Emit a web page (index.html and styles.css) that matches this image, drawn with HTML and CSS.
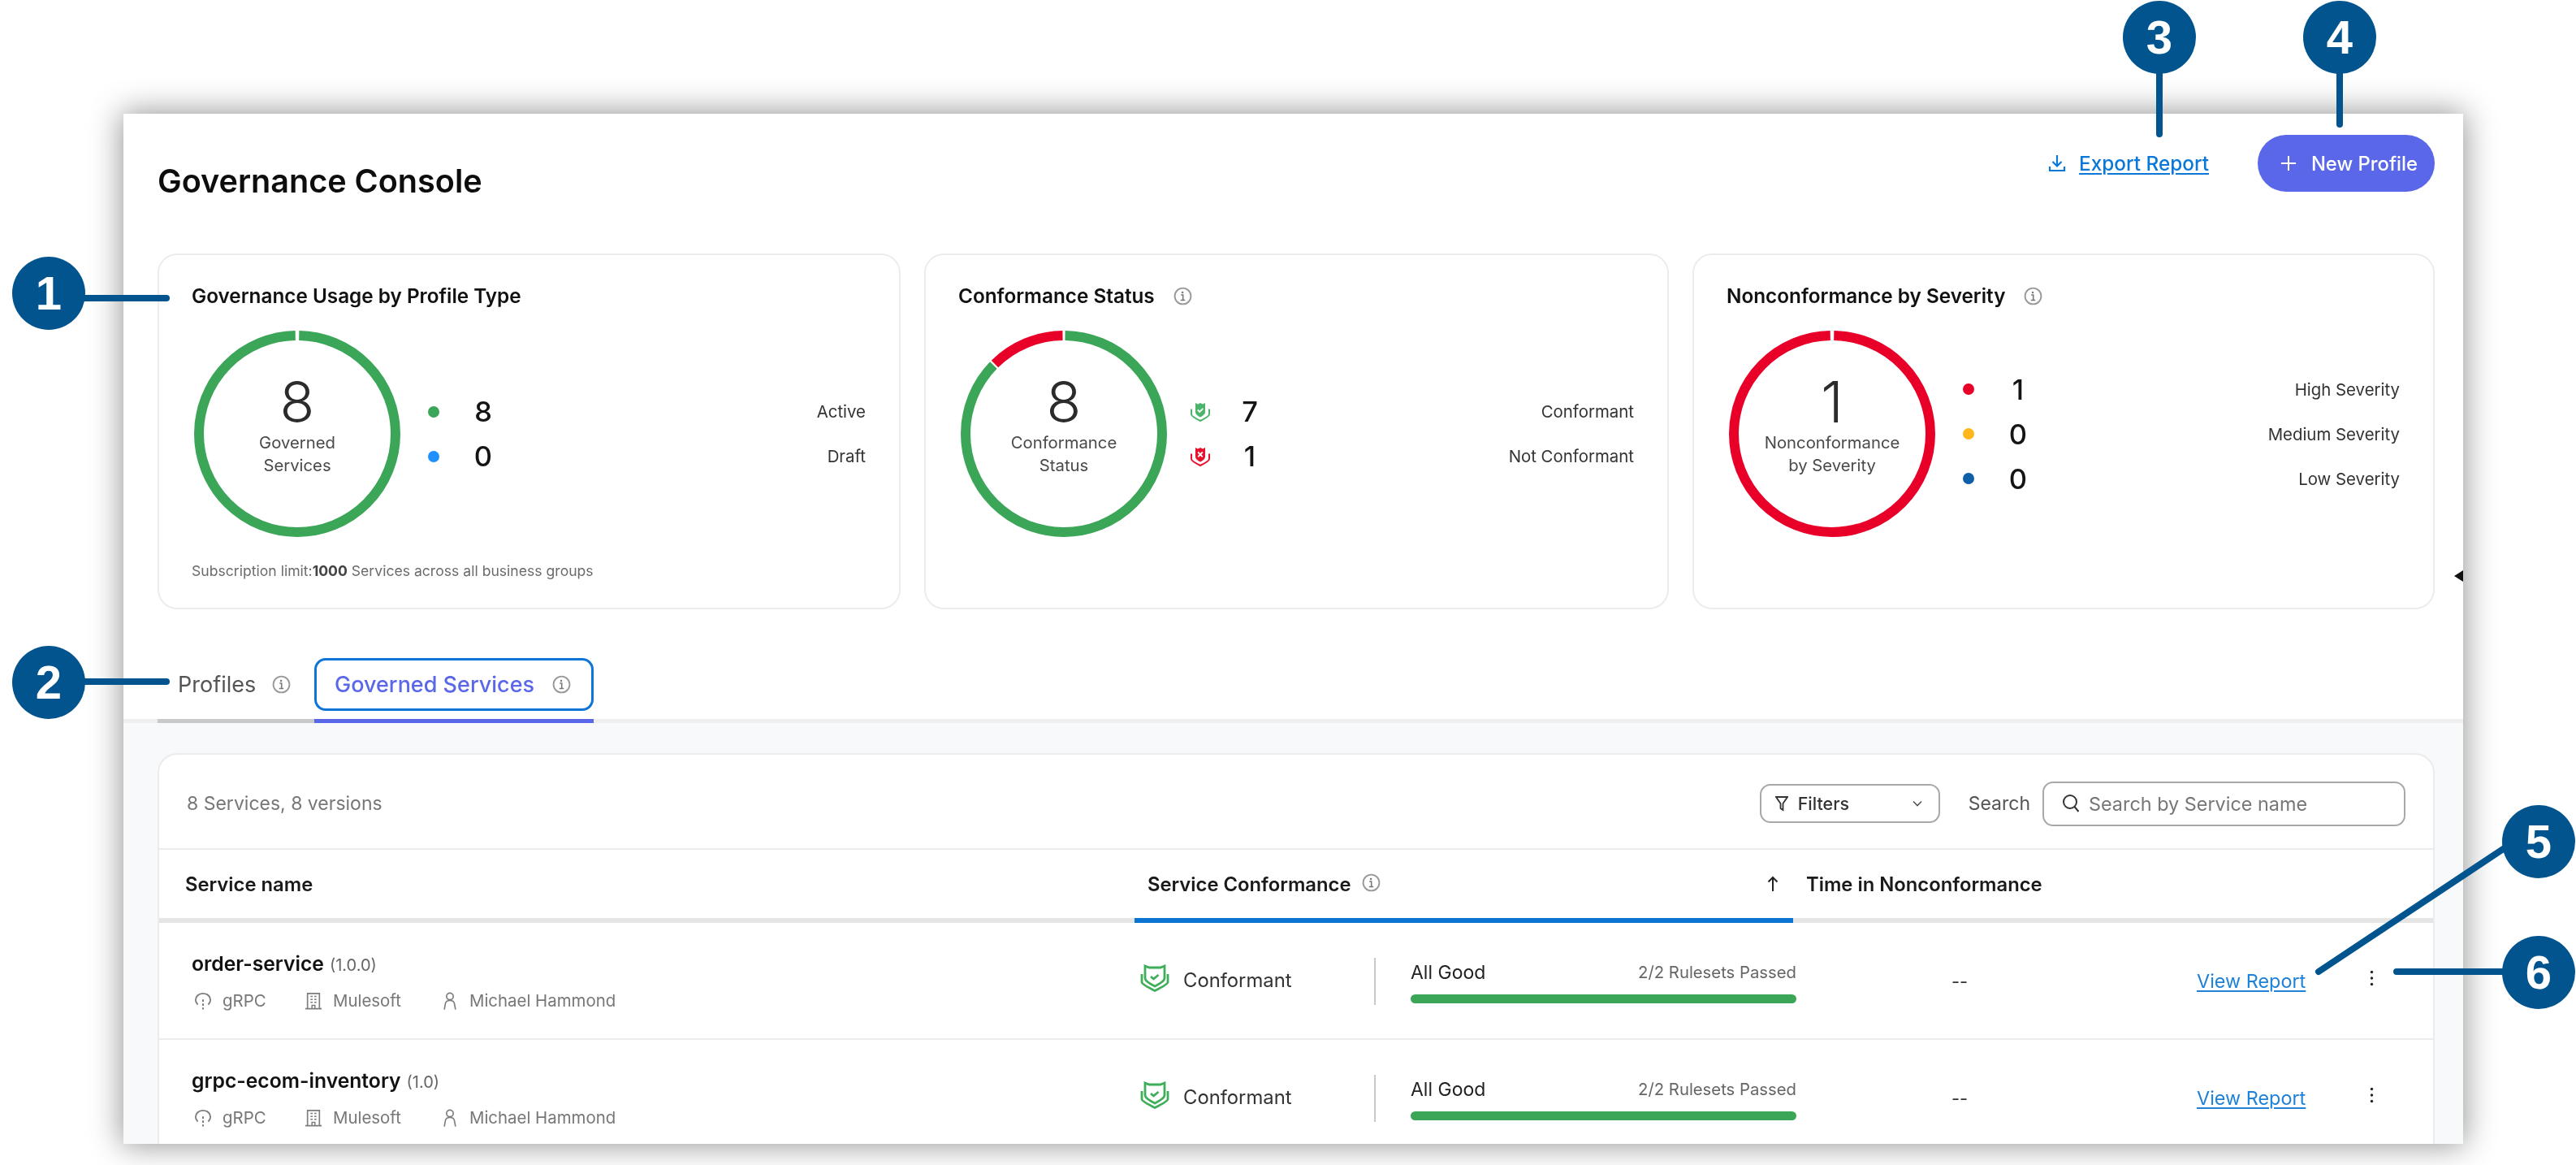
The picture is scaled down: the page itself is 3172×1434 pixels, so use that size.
FILE: index.html
```
<!DOCTYPE html>
<html lang="en">
<head>
<meta charset="utf-8">
<title>Governance Console</title>
<link rel="stylesheet" href="styles.css">
</head>
<body>
<svg class="defs" aria-hidden="true">
  <defs>
    <symbol id="info" viewBox="0 0 22 22">
      <circle cx="11" cy="11" r="9.500" fill="none" stroke="#9a9a9a" stroke-width="1.800"/>
      <circle cx="10.600" cy="6.600" r="1.200" fill="#777"/>
      <path d="M8.800 9.600h2.400v6M8.400 15.800h5.200" fill="none" stroke="#777" stroke-width="1.500"/>
    </symbol>
    <symbol id="shield" viewBox="0 0 36 35">
      <path d="M6 2l5 2h14l5-2V17c0 3.500-6 7-12 10-6-3-12-6.500-12-10z" fill="none" stroke="#3fae5a" stroke-width="2.800"/>
      <path d="M2 12v10c0 2 9 7 16 10.500 7-3.500 16-8.500 16-10.500V12" fill="none" stroke="#3fae5a" stroke-width="2.800"/>
      <path d="M13 15l3.500 3 6-5" fill="none" stroke="#3fae5a" stroke-width="2.800"/>
    </symbol>
    <symbol id="shield-ok" viewBox="0 0 24 24">
      <path d="M6 1l3 1.500L12 1l3 1.500L18 1v11c0 3-3 5-6 6.500C9 17 6 15 6 12z" fill="#4cb56b"/>
      <path d="M1 8.500v6.500c0 2.500 6 5.500 11 8 5-2.500 11-5.500 11-8V8.500" fill="none" stroke="#4cb56b" stroke-width="2"/>
      <path d="M8.800 9.500l2.400 2.400 4.200-4" fill="none" stroke="#fff" stroke-width="1.800"/>
    </symbol>
    <symbol id="shield-bad" viewBox="0 0 24 24">
      <path d="M6 1l3 1.500L12 1l3 1.500L18 1v11c0 3-3 5-6 6.500C9 17 6 15 6 12z" fill="#e8112d"/>
      <path d="M1 8.500v6.500c0 2.500 6 5.500 11 8 5-2.500 11-5.500 11-8V8.500" fill="none" stroke="#e8112d" stroke-width="2"/>
      <path d="M9.200 6.500l5.600 5.800M14.800 6.500l-5.600 5.800" fill="none" stroke="#fff" stroke-width="1.800"/>
    </symbol>
    <symbol id="cloud" viewBox="0 0 24 24">
      <path d="M5 17C3 15 2 13 2 11 2 6 6 2 12 2s10 4 10 9c0 2-1 4-3 6" fill="none" stroke="#7c7c7c" stroke-width="2"/>
      <path d="M12 10v3M12 15.500v3M12 21v2.500" fill="none" stroke="#7c7c7c" stroke-width="2.200"/>
    </symbol>
    <symbol id="building" viewBox="0 0 24 24">
      <path d="M4 22.500V2h16v20.500M1 22.500h22" fill="none" stroke="#7c7c7c" stroke-width="1.800"/>
      <path d="M8 6h3M13 6h3M8 10h3M13 10h3M8 14h3M13 14h3M10 22v-4h4v4" fill="none" stroke="#7c7c7c" stroke-width="1.600"/>
    </symbol>
    <symbol id="person" viewBox="0 0 24 24">
      <circle cx="12" cy="6" r="4.500" fill="none" stroke="#7c7c7c" stroke-width="1.800"/>
      <path d="M4.500 23.500l1.500-8c.5-2.500 3-4 6-4s5.500 1.500 6 4l1.500 8" fill="none" stroke="#7c7c7c" stroke-width="1.800"/>
    </symbol>
  </defs>
</svg>

<main class="stage">
  <section class="panel">
    <header class="head">
      <h1 class="title">Governance Console</h1>
      <div class="actions">
        <a class="export" href="#">
          <svg class="export-icon" viewBox="0 0 22 24"><path d="M11 2v13M5.500 10l5.500 5.500 5.500-5.500M2 16v5h18v-5" fill="none" stroke="#0b78d8" stroke-width="2.200"/></svg>
          <span class="export-text">Export Report</span>
        </a>
        <button class="primary" type="button">
          <svg class="plus" viewBox="0 0 22 22"><path d="M11 1v20M1 11h20" fill="none" stroke="#fff" stroke-width="2.200"/></svg>
          New Profile
        </button>
      </div>
    </header>

    <div class="cards">
      <article class="card">
        <h2 class="card-title">Governance Usage by Profile Type</h2>
        <div class="chart-row">
          <div class="donut">
            <svg class="ring" viewBox="0 0 254 254">
              <circle class="seg green seg-full" cx="127" cy="127" r="121" pathLength="100"/>
            </svg>
            <div class="ring-text"><div class="ring-num">8</div><div class="ring-label">Governed<br>Services</div></div>
          </div>
          <div class="legend">
            <div class="leg-row"><span class="mark"><i class="dot d-green"></i></span><span class="num">8</span><span class="leg-label">Active</span></div>
            <div class="leg-row"><span class="mark"><i class="dot d-blue"></i></span><span class="num">0</span><span class="leg-label">Draft</span></div>
          </div>
        </div>
        <p class="limit">Subscription limit:<b>1000</b> Services across all business groups</p>
      </article>

      <article class="card">
        <h2 class="card-title">Conformance Status <svg class="info"><use href="#info"/></svg></h2>
        <div class="chart-row">
          <div class="donut">
            <svg class="ring" viewBox="0 0 254 254">
              <circle class="seg green seg-major" cx="127" cy="127" r="121" pathLength="100"/>
              <circle class="seg red seg-minor" cx="127" cy="127" r="121" pathLength="100"/>
            </svg>
            <div class="ring-text"><div class="ring-num">8</div><div class="ring-label">Conformance<br>Status</div></div>
          </div>
          <div class="legend">
            <div class="leg-row"><span class="mark"><svg class="mini-shield"><use href="#shield-ok"/></svg></span><span class="num">7</span><span class="leg-label">Conformant</span></div>
            <div class="leg-row"><span class="mark"><svg class="mini-shield"><use href="#shield-bad"/></svg></span><span class="num">1</span><span class="leg-label">Not Conformant</span></div>
          </div>
        </div>
      </article>

      <article class="card">
        <h2 class="card-title">Nonconformance by Severity <svg class="info"><use href="#info"/></svg></h2>
        <div class="chart-row">
          <div class="donut">
            <svg class="ring" viewBox="0 0 254 254">
              <circle class="seg red seg-full" cx="127" cy="127" r="121" pathLength="100"/>
            </svg>
            <div class="ring-text"><div class="ring-num">1</div><div class="ring-label">Nonconformance<br>by Severity</div></div>
          </div>
          <div class="legend">
            <div class="leg-row"><span class="mark"><i class="dot d-red"></i></span><span class="num">1</span><span class="leg-label">High Severity</span></div>
            <div class="leg-row"><span class="mark"><i class="dot d-yellow"></i></span><span class="num">0</span><span class="leg-label">Medium Severity</span></div>
            <div class="leg-row"><span class="mark"><i class="dot d-navy"></i></span><span class="num">0</span><span class="leg-label">Low Severity</span></div>
          </div>
        </div>
      </article>
    </div>

    <nav class="tabs">
      <div class="tab tab-idle"><span class="tab-inner">Profiles <svg class="info"><use href="#info"/></svg></span></div>
      <div class="tab tab-active"><span class="tab-inner tab-focus">Governed Services <svg class="info"><use href="#info"/></svg></span></div>
    </nav>

    <div class="content">
      <div class="table-card">
        <div class="toolbar">
          <span class="count">8 Services, 8 versions</span>
          <div class="tools">
            <div class="filters">
              <svg class="funnel" viewBox="0 0 16 20"><path d="M1 2h14L9.500 10v8L6.500 16v-6z" fill="none" stroke="#333" stroke-width="1.800"/></svg>
              <span class="filters-text">Filters</span>
              <svg class="chev" viewBox="0 0 12 8"><path d="M1 1.500l5 5 5-5" fill="none" stroke="#555" stroke-width="1.600"/></svg>
            </div>
            <label class="search-label">Search</label>
            <div class="search">
              <svg class="lens" viewBox="0 0 22 24"><circle cx="10" cy="10" r="8" fill="none" stroke="#333" stroke-width="2"/><path d="M15.500 16l5 6" fill="none" stroke="#333" stroke-width="2"/></svg>
              <span class="placeholder">Search by Service name</span>
            </div>
          </div>
        </div>

        <div class="thead">
          <div class="th th-name">Service name</div>
          <div class="th th-conf">Service Conformance <svg class="info info-th"><use href="#info"/></svg>
            <svg class="arrow" viewBox="0 0 14 20"><path d="M7 19V2M1.500 7.500L7 2l5.500 5.500" fill="none" stroke="#222" stroke-width="2"/></svg>
          </div>
          <div class="th th-time">Time in Nonconformance</div>
        </div>

        <div class="row">
          <div class="cell-name">
            <div class="svc"><b class="svc-name">order-service</b> <span class="svc-ver">(1.0.0)</span></div>
            <div class="meta">
              <span class="meta-item m-api"><svg class="meta-icon"><use href="#cloud"/></svg>gRPC</span>
              <span class="meta-item m-org"><svg class="meta-icon"><use href="#building"/></svg>Mulesoft</span>
              <span class="meta-item"><svg class="meta-icon"><use href="#person"/></svg>Michael Hammond</span>
            </div>
          </div>
          <div class="cell-conf">
            <svg class="shield"><use href="#shield"/></svg>
            <span class="conf-text">Conformant</span>
            <div class="progress">
              <div class="prog-top"><span class="prog-state">All Good</span><span class="prog-count">2/2 Rulesets Passed</span></div>
              <div class="bar"></div>
            </div>
          </div>
          <div class="cell-end">
            <span class="dash">--</span>
            <a class="report" href="#">View Report</a>
            <svg class="kebab" viewBox="0 0 5 20"><circle cx="2.500" cy="2.500" r="1.700"/><circle cx="2.500" cy="10" r="1.700"/><circle cx="2.500" cy="17.500" r="1.700"/></svg>
          </div>
        </div>

        <div class="row">
          <div class="cell-name">
            <div class="svc"><b class="svc-name">grpc-ecom-inventory</b> <span class="svc-ver">(1.0)</span></div>
            <div class="meta">
              <span class="meta-item m-api"><svg class="meta-icon"><use href="#cloud"/></svg>gRPC</span>
              <span class="meta-item m-org"><svg class="meta-icon"><use href="#building"/></svg>Mulesoft</span>
              <span class="meta-item"><svg class="meta-icon"><use href="#person"/></svg>Michael Hammond</span>
            </div>
          </div>
          <div class="cell-conf">
            <svg class="shield"><use href="#shield"/></svg>
            <span class="conf-text">Conformant</span>
            <div class="progress">
              <div class="prog-top"><span class="prog-state">All Good</span><span class="prog-count">2/2 Rulesets Passed</span></div>
              <div class="bar"></div>
            </div>
          </div>
          <div class="cell-end">
            <span class="dash">--</span>
            <a class="report" href="#">View Report</a>
            <svg class="kebab" viewBox="0 0 5 20"><circle cx="2.500" cy="2.500" r="1.700"/><circle cx="2.500" cy="10" r="1.700"/><circle cx="2.500" cy="17.500" r="1.700"/></svg>
          </div>
        </div>
      </div>
    </div>
  </section>

  <i class="pointer"></i>

  <svg class="leaders" viewBox="0 0 3172 1434">
    <path d="M60 367H205M60 839H205M2659 46V165M2881 46V153M3126 1016L2855 1196M3126 1196H2951"/>
  </svg>
  <div class="callout c1">1</div>
  <div class="callout c2">2</div>
  <div class="callout c3">3</div>
  <div class="callout c4">4</div>
  <div class="callout c5">5</div>
  <div class="callout c6">6</div>
</main>
</body>
</html>
```

FILE: styles.css
```
* { box-sizing: border-box; }
html, body { margin: 0; padding: 0; background: #fff; }
body { font-family: "Inter", "Liberation Sans", sans-serif; color: #1c1c1c; }
.defs { position: absolute; width: 0; height: 0; }

.stage { position: relative; width: 3172px; height: 1434px; overflow: hidden; padding: 140px 0 0 152px; filter: blur(.5px); }

.panel {
  width: 2881px; height: 1268px; background: #fff;
  display: flex; flex-direction: column; overflow: hidden;
  box-shadow: 0 0 36px 2px rgba(0, 0, 0, .42);
}

.head { display: flex; justify-content: space-between; align-items: center; height: 172px; padding: 0 35px 50px 42px; flex: none; }
.title { margin: 0; font-size: 39.600px; font-weight: 600; color: #0d0d0d; line-height: 46px; padding-top: 44px; }
.actions { display: flex; align-items: center; }
.export { display: flex; align-items: center; gap: 16px; color: #0b78d8; font-size: 24.300px; font-weight: 500; text-decoration: none; }
.export-icon { width: 22px; height: 24px; }
.export-text { text-decoration: underline; text-underline-offset: 3px; }
.primary {
  margin-left: 60px; width: 218px; height: 70px; border: 0; border-radius: 35px;
  background: #5a67e8; color: #fff; font: 500 23.800px "Inter", sans-serif;
  display: flex; align-items: center; justify-content: flex-end; gap: 18px; padding: 0 21px 0 0;
}
.plus { width: 20px; height: 20px; }

.cards { display: grid; grid-template-columns: 915px 917px 914px; gap: 29px; padding: 0 35px 0 42px; flex: none; }
.card { height: 438px; background: #fff; border: 2px solid #ececec; border-radius: 24px; padding: 35px 41px 0 40px; }
.card-title { display: flex; align-items: center; gap: 23px; margin: 0 0 28px; font-size: 24.300px; font-weight: 600; line-height: 30px; color: #111; }
.info { width: 23px; height: 23px; flex: none; }

.chart-row { display: flex; align-items: center; height: 254px; padding-left: 3px; }
.donut { width: 254px; height: 254px; display: grid; flex: none; }
.ring, .ring-text { grid-area: 1 / 1; }
.ring { width: 254px; height: 254px; transform: rotate(-90deg); }
.seg { fill: none; stroke-width: 12; }
.green { stroke: #3ba658; }
.red { stroke: #e80028; }
.seg-full { stroke-dasharray: 99.400 100; stroke-dashoffset: -.3; }
.seg-major { stroke-dasharray: 87.100 100; stroke-dashoffset: -.2; }
.seg-minor { stroke-dasharray: 12.200 100; stroke-dashoffset: -87.600; }
.ring-text { place-self: center; text-align: center; padding-bottom: 22px; }
.ring-num { font-size: 70px; font-weight: 300; line-height: 72px; color: #2b2b2b; }
.ring-label { font-size: 20.300px; line-height: 28px; color: #4a4a4a; }

.legend { flex: 1; margin-left: 29px; display: flex; flex-direction: column; }
.leg-row { display: flex; align-items: center; height: 55px; }
.mark { width: 24px; display: flex; justify-content: center; flex: none; }
.dot { width: 14px; height: 14px; border-radius: 50%; display: block; }
.d-green { background: #3ba658; }
.d-blue { background: #1e90ff; }
.d-red { background: #e80028; }
.d-yellow { background: #ffb81c; }
.d-navy { background: #0f5ea8; }
.mini-shield { width: 24px; height: 24px; display: block; }
.num { width: 30px; margin-left: 34px; text-align: center; font-size: 34.500px; font-weight: 500; color: #141414; }
.leg-label { margin-left: auto; font-size: 20.400px; color: #333; }
.limit { margin: 30px 0 0; font-size: 17.600px; line-height: 24px; color: #6b6b6b; }
.limit b { font-weight: 700; color: #444; }

.tabs { display: flex; height: 140px; padding: 60px 35px 0 42px; flex: none; box-shadow: inset 0 -5px 0 #efefef; }
.tab { height: 80px; border-bottom: 5px solid; }
.tab-idle { width: 193px; border-color: #c9c9c9; padding-left: 25px; }
.tab-idle .tab-inner { gap: 20px; }
.tab-active { width: 344px; border-color: #5a67e8; }
.tab-inner { display: flex; align-items: center; gap: 22px; height: 65px; font-size: 27px; color: #555; }
.tab-focus { border: 3.500px solid #0e74d8; border-radius: 14px; padding-left: 22px; color: #5a67e8; font-weight: 500; }

.content { flex: 1; background: #f8f9fa; padding: 37px 35px 0 42px; min-height: 0; }
.table-card { background: #fff; border: 2px solid #ececec; border-bottom: 0; border-radius: 24px 24px 0 0; height: 100%; overflow: hidden; }

.toolbar { height: 117px; display: flex; justify-content: space-between; align-items: center; padding: 5px 34px 0 34px; border-bottom: 2px solid #ececec; }
.count { font-size: 23px; color: #777; }
.tools { display: flex; align-items: center; }
.filters { width: 222px; height: 48px; border: 2px solid #a8a8a8; border-radius: 13px; display: flex; align-items: center; padding: 0 20px 0 17px; }
.funnel { width: 16px; height: 20px; }
.filters-text { margin-left: 12px; font-size: 21.500px; font-weight: 500; color: #333; }
.chev { width: 12px; height: 8px; margin-left: auto; }
.search-label { margin: 0 15px 0 35px; font-size: 23px; color: #555; }
.search { width: 447px; height: 55px; border: 2px solid #a8a8a8; border-radius: 13px; display: flex; align-items: center; padding-left: 22px; }
.lens { width: 22px; height: 24px; }
.placeholder { margin-left: 11px; font-size: 23.400px; color: #777; }

.thead { display: grid; grid-template-columns: 1201px 811px 1fr; height: 90px; }
.th { display: flex; align-items: center; border-bottom: 6px solid #e5e5e5; font-size: 23.800px; font-weight: 600; color: #1a1a1a; padding-left: 16px; }
.th-name { padding-left: 32px; }
.th-conf { border-bottom-color: #0b74d1; }
.info-th { margin-left: 13px; margin-top: -4px; }
.arrow { width: 14px; height: 20px; margin-left: auto; margin-right: 18px; }

.row { display: grid; grid-template-columns: 1201px 815px 1fr; height: 144px; border-bottom: 2px solid #ececec; align-items: center; }
.cell-name { padding: 3px 0 0 40px; }
.svc { font-size: 24.700px; line-height: 30px; color: #555; }
.svc-name { font-weight: 600; color: #111; }
.svc-ver { font-size: 20px; color: #666; }
.meta { display: flex; margin: 14px 0 0 3px; font-size: 20.400px; line-height: 30px; color: #777; }
.meta-item { display: flex; align-items: center; }
.m-api { width: 136px; }
.m-org { width: 168px; }
.meta-icon { width: 22px; height: 22px; margin-right: 13px; flex: none; }

.cell-conf { display: flex; align-items: center; padding: 2px 0 0 7px; }
.shield { width: 36px; height: 35px; flex: none; margin-top: -8px; }
.conf-text { margin-left: 17px; font-size: 23.800px; color: #333; width: 237px; height: 58px; line-height: 56px; border-right: 2.500px solid #c9c9c9; flex: none; }
.progress { flex: 1; margin-left: 43px; }
.prog-top { display: flex; justify-content: space-between; align-items: center; height: 30px; }
.prog-state { font-size: 23px; color: #222; }
.prog-count { font-size: 20.300px; color: #666; }
.bar { height: 11px; margin-top: 12px; border-radius: 6px; background: #3ba658; }

.cell-end { display: flex; align-items: center; padding-top: 1px; }
.dash { width: 402px; text-align: center; font-size: 22px; color: #333; }
.report { margin-left: 91px; font-size: 23.400px; color: #1f82d8; text-decoration: underline; text-underline-offset: 3px; }
.kebab { width: 5px; height: 20px; margin-left: 79px; margin-top: -8px; fill: #222; }

.pointer { position: absolute; left: 3022px; top: 702px; width: 0; height: 0; border: 7px solid transparent; border-left: 0; border-right: 11px solid #111; }
.leaders { position: absolute; inset: 0; width: 3172px; height: 1434px; pointer-events: none; }
.leaders path { fill: none; stroke: #02548f; stroke-width: 8; stroke-linecap: round; }
.callout {
  position: absolute; width: 90px; height: 90px; border-radius: 50%;
  background: #02548f; color: #fff; font: 700 58px/90px "Liberation Sans", sans-serif; text-align: center;
}
.c1 { left: 15px; top: 316px; }
.c2 { left: 15px; top: 795px; }
.c3 { left: 2614px; top: 1px; }
.c4 { left: 2836px; top: 1px; }
.c5 { left: 3081px; top: 991px; }
.c6 { left: 3081px; top: 1152px; }
```
